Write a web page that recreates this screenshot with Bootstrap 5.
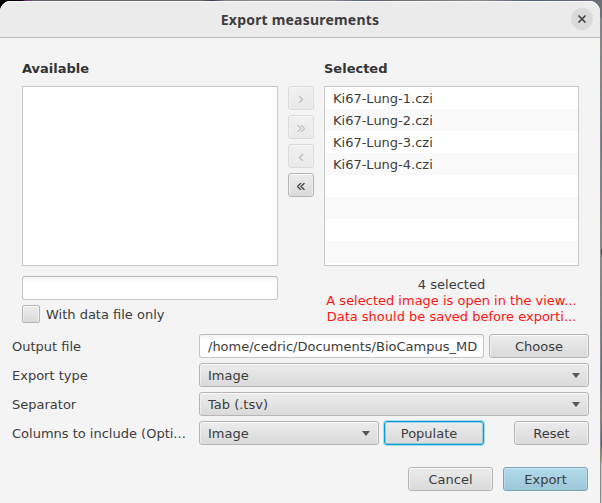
<!DOCTYPE html>
<html lang="en">
<head>
<meta charset="utf-8">
<meta name="viewport" content="width=device-width, initial-scale=1">
<title>Export measurements</title>
<link href="https://cdn.jsdelivr.net/npm/bootstrap@5.3.0/dist/css/bootstrap.min.css" rel="stylesheet">
<style>
  body { width: 602px; height: 503px; overflow: hidden; font: 13px/16px "DejaVu Sans", sans-serif; color: #3c3c3c;
    background: linear-gradient(90deg, #000 0 22px, #8a1a90 26px, #66646c 34px, #6c6a70 200px, #40344c 212px, #85838a 225px, #8a888c 330px, #56617a 365px, #756c6c 400px, #8a8888 480px, #536078 530px, #6d7078 602px); }
  .dialog-win { width: 600px; height: 502px; margin-top: 1px; background: #f4f4f4; border-radius: 11px 11px 0 0; }
  .title-strip { height: 37px; background: #ebebeb; border-bottom: 1px solid #bababa; border-radius: 11px 11px 0 0; box-shadow: inset 0 1px #fafafa; }
  .title-text { font: bold 14px/18px "Noto Sans", sans-serif; letter-spacing: .2px; padding-top: 2px; color: #3d3d3d; }
  .close-dot { width: 22px; height: 22px; right: 7px; top: 7px; background: #dadada; }
  .edge { width: 2px; height: 485px; right: 0; bottom: 0; background: linear-gradient(#777b84 0, #8a8280 60px, #6a7385 120px, #8b8786 230px, #333 233px, #92908e 240px, #777 300px, #5c6a85 350px, #8b7a70 400px, #4a5a7a 425px, #8fa050 440px, #c8c8c8 446px, #ccc 100%); border-left: 1px solid #888; }
  .panes { padding: 22px 21px 0 22px; gap: 10px; }
  .pane-a { width: 256px; } .pane-b { width: 255px; }
  .heading-text { line-height: 18px; margin-bottom: 8px; color: #333; }
  .list-box { height: 180px; background: #fff; border: 1px solid #c8c8c8; }
  .list-box li { height: 22px; line-height: 23px; padding-left: 8px; }
  .list-box li:nth-child(even) { background: #f9f9f9; }
  .arrows { padding-top: 26px; }
  .btn.fx, .fx-combo, .fx-check { font-size: 13px; line-height: 22px; height: 24px; padding: 1px 0 0; color: #3c3c3c; border: 1px solid #b5b5b5; border-radius: 3px; background: linear-gradient(#ececec, #dadada); box-shadow: inset 0 1px #f9f9f9, inset 1px 0 #efefef, inset -1px 0 #efefef; }
  .btn.fx.w-arrow { width: 26px; padding: 3px 0 0; display: flex; align-items: center; justify-content: center; }
  .btn.fx:disabled { opacity: .4; }
  .btn.fx:disabled svg { opacity: .6; }
  .btn.fx.focused { padding-right: 10px; border: 1px solid #039ed3; box-shadow: 0 0 0 1px rgba(3,158,211,.3), inset 0 0 0 1px rgba(3,158,211,.35), inset 0 2px #eee; }
  .btn.fx.go { border-color: #7ba5b7; background: linear-gradient(#b1daeb, #9dc6d8); box-shadow: inset 0 1px #c7e6f2, inset 1px 0 #b6dae8, inset -1px 0 #b6dae8; }
  .fx-check { width: 18px; height: 18px; border-radius: 2px; }
  .fx-input { height: 24px; line-height: 22px; border: 1px solid #c6c6c6; border-top-color: #b8b8b8; border-radius: 3px; background: linear-gradient(#f2f2f2, #fff 5px); padding: 1px 0 0 8px; }
  .fx-input.search-box { margin-top: 10px; }
  .check-row { margin-top: 5px; gap: 6px; }
  .check-row span:last-child { padding-top: 1px; }
  .notes { padding-top: 11px; }
  .fx-combo { padding: 0 8px; }
  .fx-combo span { padding-top: 1px; }
  .caret-down { width: 0; height: 0; border: 4.5px solid transparent; border-top: 5px solid #555; border-bottom: 0; }
  .note-red { color: #ff1414; }
  .form-rows { padding: 9px 11px 0 12px; gap: 5px; }
  .form-label-col { width: 187px; line-height: 26px; height: 24px; }
  .w-285 { width: 285px; } .w-180 { width: 180px; } .w-100px { width: 100px; } .w-75px { width: 75px; } .w-85 { width: 85px; }
  .gap-5px { gap: 5px; }
  .actions { padding: 22px 12px 0; gap: 10px; }
</style>
</head>
<body class="position-relative">
<div class="edge position-absolute"></div>
<main class="dialog-win position-relative">
  <header class="title-strip position-relative d-flex align-items-center justify-content-center">
    <span class="title-text">Export measurements</span>
    <span class="close-dot position-absolute rounded-circle d-flex align-items-center justify-content-center">
      <svg width="8" height="8" viewBox="0 0 8 8"><path d="M.5.5l7 7M7.5.5l-7 7" stroke="#3d3d3d" stroke-width="1.5"/></svg>
    </span>
  </header>
  <section class="panes d-flex">
    <div class="pane-a">
      <div class="heading-text fw-bold">Available</div>
      <div class="list-box"></div>
      <div class="fx-input search-box"></div>
      <div class="d-flex align-items-center check-row"><span class="fx-check"></span><span>With data file only</span></div>
    </div>
    <div class="d-flex flex-column gap-5px arrows">
      <button class="btn fx w-arrow" disabled><svg width="6" height="7" viewBox="0 .5 6 7"><path d="M1 .5L4.5 4L1 7.5" fill="none" stroke="#333" stroke-width="1.5"/></svg></button>
      <button class="btn fx w-arrow" disabled><svg width="8" height="7" viewBox="0 .5 8 7"><path d="M.5.5L4 4L.5 7.5M4 .5L7.5 4L4 7.5" fill="none" stroke="#333" stroke-width="1.3"/></svg></button>
      <button class="btn fx w-arrow" disabled><svg width="6" height="7" viewBox="0 .5 6 7"><path d="M5 .5L1.5 4L5 7.5" fill="none" stroke="#333" stroke-width="1.5"/></svg></button>
      <button class="btn fx w-arrow"><svg width="8" height="7" viewBox="0 .5 8 7"><path d="M4 .5L.5 4L4 7.5M7.5 .5L4 4L7.5 7.5" fill="none" stroke="#444" stroke-width="1.3"/></svg></button>
    </div>
    <div class="pane-b">
      <div class="heading-text fw-bold">Selected</div>
      <ul class="list-box list-unstyled mb-0 overflow-hidden">
        <li>Ki67-Lung-1.czi</li><li>Ki67-Lung-2.czi</li><li>Ki67-Lung-3.czi</li><li>Ki67-Lung-4.czi</li><li></li><li></li><li></li><li></li>
      </ul>
      <div class="text-center notes text-nowrap">
        <div>4 selected</div>
        <div class="note-red">A selected image is open in the view...</div>
        <div class="note-red">Data should be saved before exporti...</div>
      </div>
    </div>
  </section>
  <section class="form-rows d-flex flex-column">
    <div class="d-flex"><span class="form-label-col">Output file</span>
      <div class="d-flex gap-5px"><div class="fx-input w-285 text-nowrap">/home/cedric/Documents/BioCampus_MD</div><button class="btn fx w-100px">Choose</button></div></div>
    <div class="d-flex"><span class="form-label-col">Export type</span>
      <div class="fx-combo flex-fill d-flex align-items-center justify-content-between"><span>Image</span><i class="caret-down"></i></div></div>
    <div class="d-flex"><span class="form-label-col">Separator</span>
      <div class="fx-combo flex-fill d-flex align-items-center justify-content-between"><span>Tab (.tsv)</span><i class="caret-down"></i></div></div>
    <div class="d-flex"><span class="form-label-col text-nowrap">Columns to include (Opti...</span>
      <div class="d-flex gap-5px flex-fill"><div class="fx-combo w-180 d-flex align-items-center justify-content-between"><span>Image</span><i class="caret-down"></i></div><button class="btn fx focused w-100px">Populate</button><button class="btn fx w-75px ms-auto">Reset</button></div></div>
  </section>
  <footer class="actions d-flex justify-content-end">
    <button class="btn fx w-85">Cancel</button><button class="btn fx go w-85">Export</button>
  </footer>
</main>
<script src="https://cdn.jsdelivr.net/npm/bootstrap@5.3.0/dist/js/bootstrap.bundle.min.js"></script>
</body>
</html>
